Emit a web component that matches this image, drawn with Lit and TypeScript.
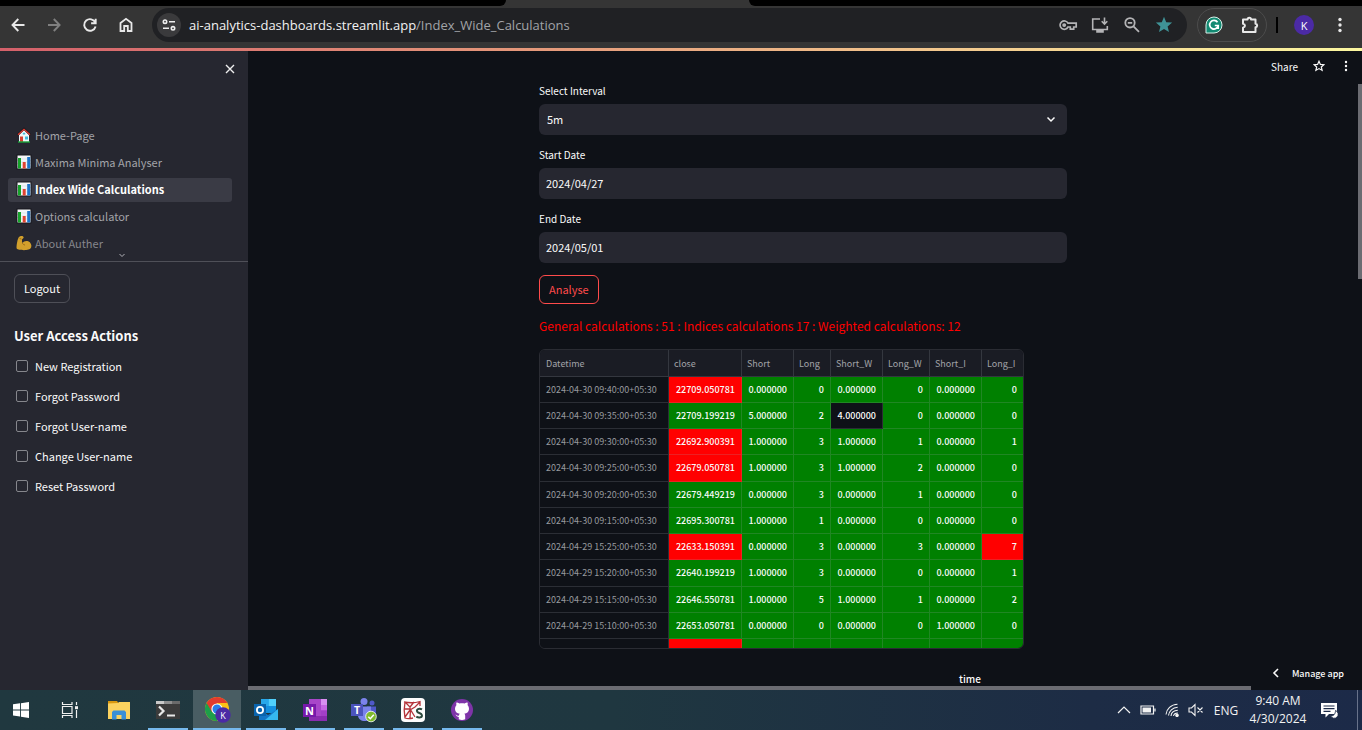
import { LitElement, html, css, svg } from "lit";
import { customElement, state } from "lit/decorators.js";
import { classMap } from "lit/directives/class-map.js";

type Row = [string, string, string, string, string, string, string, string];

const HEADERS = ["Datetime", "close", "Short", "Long", "Short_W", "Long_W", "Short_I", "Long_I"];

const ROWS: Row[] = [
  ["2024-04-30 09:40:00+05:30", "22709.050781", "0.000000", "0", "0.000000", "0", "0.000000", "0"],
  ["2024-04-30 09:35:00+05:30", "22709.199219", "5.000000", "2", "4.000000", "0", "0.000000", "0"],
  ["2024-04-30 09:30:00+05:30", "22692.900391", "1.000000", "3", "1.000000", "1", "0.000000", "1"],
  ["2024-04-30 09:25:00+05:30", "22679.050781", "1.000000", "3", "1.000000", "2", "0.000000", "0"],
  ["2024-04-30 09:20:00+05:30", "22679.449219", "0.000000", "3", "0.000000", "1", "0.000000", "0"],
  ["2024-04-30 09:15:00+05:30", "22695.300781", "1.000000", "1", "0.000000", "0", "0.000000", "0"],
  ["2024-04-29 15:25:00+05:30", "22633.150391", "0.000000", "3", "0.000000", "3", "0.000000", "7"],
  ["2024-04-29 15:20:00+05:30", "22640.199219", "1.000000", "3", "0.000000", "0", "0.000000", "1"],
  ["2024-04-29 15:15:00+05:30", "22646.550781", "1.000000", "5", "1.000000", "1", "0.000000", "2"],
  ["2024-04-29 15:10:00+05:30", "22653.050781", "0.000000", "0", "0.000000", "0", "1.000000", "0"],
  ["", "", "", "", "", "", "", ""],
];

const RED_CELLS = new Set(["0-1", "2-1", "3-1", "6-1", "6-7", "10-1"]);
const DARK_CELLS = new Set(["1-4"]);

const chart = svg`
  <rect x="1" y="1" width="14" height="14" fill="#f4f6f8" stroke="#16161c"/>
  <path d="M1.5 5h13M1.5 8h13M1.5 11h13" stroke="#c9dbe6" stroke-width=".6"/>
  <rect x="2" y="4" width="3" height="10.5" fill="#17a32b"/>
  <rect x="6.7" y="8" width="3" height="6.5" fill="#e0432f"/>
  <rect x="11.2" y="3" width="3" height="11.5" fill="#1d74c9"/>`;
const house = svg`
  <path d="M3 7v8h10V7L8 2.500z" fill="#eef6f8"/>
  <path d="M1.600 8 8 1.800 14.400 8" fill="none" stroke="#1a1a20" stroke-width="2.200"/>
  <path d="M2 7.800 8 2.200 14 7.800" fill="none" stroke="#e23a2e" stroke-width="1.200"/>
  <rect x="4" y="9.500" width="3" height="5.500" fill="#d8402f"/>
  <path d="M9 9.500h3v3H9zM6.800 5.800h2.400v1.800H6.800z" fill="#3fb9d8"/>
  <path d="M2 15h12" stroke="#19a53a" stroke-width="1.400"/>`;
const muscle = svg`
  <path d="M4.2 1.2c1.5-.6 3-.2 3.4.8.2.9-.6 1.9-1.5 2.2-.3 1.300-.2 2.600.3 3.800C7.600 6.300 10 5.400 12.200 6.300c2.600 1.100 3.700 4 3 6-.8 2.200-4 2.900-7.200 2.900-3 0-6.600-.4-7.300-1.600C.2 12 1.200 5.200 2.600 2.600c.4-.7.900-1.100 1.600-1.400z" fill="#f0b62c"/>
  <path d="M6.300 8.200c.6 1 1.500 1.700 2.700 1.900M3.600 3.400l1.800.7" fill="none" stroke="#a96f12" stroke-width=".9"/>`;

const NAV = [
  { label: "Home-Page", icon: house },
  { label: "Maxima Minima Analyser", icon: chart },
  { label: "Index Wide Calculations", icon: chart, active: true },
  { label: "Options calculator", icon: chart },
  { label: "About Auther", icon: muscle, faded: true },
];

const ACTIONS = ["New Registration", "Forgot Password", "Forgot User-name", "Change User-name", "Reset Password"];

@customElement("browser-bar")
export class BrowserBar extends LitElement {
  static styles = css`
    :host { display: block; background: #353535; font-family: "Open Sans", "Noto Sans", sans-serif; }
    .tabs { height: 6px; display: flex; }
    .tabs .before { flex: 0 0 506px; background: #000; border-radius: 0 0 6px 0; }
    .tabs .tab { flex: 0 0 243px; }
    .tabs .after { flex: 1; background: #000; border-radius: 0 0 0 6px; }
    .bar { display: flex; align-items: center; height: 42px; padding: 0 10px 4px 6px; box-sizing: border-box; }
    button { display: grid; place-items: center; border: 0; padding: 0; background: none; color: #e8e8e8; width: 24px; height: 34px; flex: none; }
    button svg { display: block; }
    .nav { display: flex; gap: 12px; margin-right: 14px; }
    .off { color: #808080; }
    .omni { flex: 1; min-width: 0; display: flex; align-items: center; height: 34px; border-radius: 17px; background: #202124; padding: 0 11px 0 5px; gap: 8px; color: #b4b4b6; }
    .omni button { color: #b4b4b6; }
    .omni .site { width: 24px; height: 24px; border-radius: 12px; background: #3a3a3c; color: #eee; }
    .url { flex: 1; min-width: 0; font-size: 13px; line-height: 20px; color: #a2a4a8; white-space: nowrap; }
    .url b { font-weight: 400; color: #f2f2f2; }
    .omni .star { color: #3f9296; }
    .ext { display: flex; align-items: center; gap: 12px; height: 32px; margin-left: 10px; padding: 0 4px; border: 1px solid #4c4c4c; border-radius: 17px; }
    .sep { width: 2px; height: 16px; background: #000; margin: 0 16px 0 9px; }
    .avatar { width: 20px; height: 20px; border-radius: 10px; background: #4b2aa5; color: #fff; font-size: 11px; font-family: inherit; }
    .more { margin-left: 14px; }
    .line { height: 3px; background: linear-gradient(90deg, #d4606a, #e59a7b 40%, #f3c98e 70%, #fbf7a0); }
  `;
  render() {
    return html`
      <div class="tabs"><span class="before"></span><span class="tab"></span><span class="after"></span></div>
      <div class="bar">
        <div class="nav">
          <button aria-label="Back"><svg width="24" height="24" viewBox="0 0 24 24" fill="none" stroke="currentColor" stroke-width="1.9"><path d="M18.500 12H6.800M12.300 6 6.500 12l5.800 6"/></svg></button>
          <button class="off" aria-label="Forward"><svg width="24" height="24" viewBox="0 0 24 24" fill="none" stroke="currentColor" stroke-width="1.900"><path d="M6 12h11.500M11.800 6l5.800 6-5.800 6"/></svg></button>
          <button aria-label="Reload"><svg width="24" height="24" viewBox="0 0 24 24" fill="none" stroke="currentColor" stroke-width="1.900"><path d="M17.300 9.600A5.800 5.800 0 1 0 17.600 13.500M17.700 5.800v4.400h-4.600"/></svg></button>
          <button aria-label="Home"><svg width="24" height="24" viewBox="0 0 24 24" fill="none" stroke="currentColor" stroke-width="1.800"><path d="M6.500 18V10L12 5.800 17.500 10v8h-3.700v-5h-3.600v5z"/></svg></button>
        </div>
        <div class="omni">
          <button class="site" aria-label="Site information"><svg width="16" height="16" viewBox="0 0 16 16" fill="none" stroke="currentColor" stroke-width="1.600"><circle cx="4" cy="4.700" r="1.700"/><path d="M8 4.700h6M2 11.300h6"/><circle cx="12" cy="11.300" r="1.700"/></svg></button>
          <div class="url"><b>ai-analytics-dashboards.streamlit.app</b>/Index_Wide_Calculations</div>
          <button aria-label="Passwords"><svg width="20" height="20" viewBox="0 0 20 20" fill="none" stroke="currentColor" stroke-width="1.700"><path d="M10 8.200A4.200 4.200 0 1 0 10 12h2.300v2.200h3.400V12h2.500V8.200z"/><circle cx="6.200" cy="10.100" r="1.100" fill="currentColor"/></svg></button>
          <button aria-label="Install app"><svg width="20" height="20" viewBox="0 0 20 20" fill="none" stroke="currentColor" stroke-width="1.600"><path d="M10 4H2.700v10.500h14.600V11"/><path d="M7 15h6v2H7z" fill="currentColor"/><path d="M14.500 2.500V9M11.700 6.300l2.800 2.800 2.800-2.800"/></svg></button>
          <button aria-label="Zoom"><svg width="20" height="20" viewBox="0 0 20 20" fill="none" stroke="currentColor" stroke-width="1.800"><circle cx="8" cy="7.800" r="4.700"/><path d="M11.500 11.300l5.500 5.500M5.800 7.800h4.400"/></svg></button>
          <button class="star" aria-label="Bookmarked"><svg width="20" height="20" viewBox="0 0 20 20" fill="currentColor"><path d="M10 1.800l2.200 5.400 5.900.4-4.500 3.800 1.400 5.700-5-3.100-5 3.100 1.400-5.700L1.900 7.600l5.900-.4z"/></svg></button>
        </div>
        <div class="ext">
          <button aria-label="Grammarly"><svg width="18" height="18" viewBox="0 0 18 18"><path d="M1 17V9a8 8 0 1 1 8 8z" fill="#138a72" stroke="#d9efe9" stroke-width="1"/><path d="M12.500 6.300A4.300 4.300 0 1 0 13.200 9.500H9.800M13.200 9.500v3.400" fill="none" stroke="#fff" stroke-width="1.700"/></svg></button>
          <button aria-label="Extensions"><svg width="20" height="20" viewBox="0 0 20 20" fill="none" stroke="currentColor" stroke-width="2" stroke-linejoin="round"><path d="M3 4.500h4.600c0-2.200 3.400-2.200 3.400 0h4.500v4.300c2.200.2 2.200 3.200 0 3.400V17H3v-4.400c2.600-.6 2.600-3.200 0-3.800z"/></svg></button>
        </div>
        <span class="sep"></span>
        <button class="avatar" aria-label="Profile K">K</button>
        <button class="more" aria-label="Menu"><svg width="20" height="20" viewBox="0 0 20 20" fill="currentColor"><circle cx="10" cy="4.500" r="1.700"/><circle cx="10" cy="10" r="1.700"/><circle cx="10" cy="15.500" r="1.700"/></svg></button>
      </div>
      <div class="line"></div>
    `;
  }
}

@customElement("side-panel")
export class SidePanel extends LitElement {
  static styles = css`
    :host { display: flex; flex-direction: column; background: #262730; color: #fafafa; font-family: "Noto Sans CJK SC", sans-serif; font-size: 11px; line-height: 24px; }
    button { font: inherit; color: inherit; background: none; }
    .close { align-self: flex-end; margin: 8px 8px 0 0; width: 20px; height: 20px; border: 0; padding: 0; display: grid; place-items: center; }
    nav { display: flex; flex-direction: column; gap: 3px; padding: 45px 16px 0 8px; }
    a { display: flex; align-items: center; gap: 3px; height: 24px; box-sizing: border-box; padding: 0 0 2px 8px; color: #a3a4a9; text-decoration: none; border-radius: 3px; }
    a.active { background: #3a3b45; color: #fff; font-weight: 700; }
    a.faded { color: #85868c; }
    a.faded svg { opacity: .85; }
    .expand { display: grid; place-items: center; height: 12px; margin-top: -6px; border: 0; border-bottom: 1px solid #4f5058; padding: 0 4px 0 0; box-sizing: border-box; color: #b0b1b6; }
    .body { padding: 12px 14px; }
    .logout { height: 29px; padding: 0 9px 2px; border: 1px solid #4e4f57; border-radius: 6px; }
    h2 { margin: 19px 0 1px; font-size: 13px; line-height: 28px; font-weight: 700; }
    label { display: flex; align-items: center; gap: 7px; height: 30px; padding-left: 2px; }
    input { appearance: none; margin: 0; width: 12px; height: 12px; border: 1px solid #85868c; border-radius: 2px; }
    input:checked { background: #ff4b4b; }
  `;
  render() {
    return html`
      <button class="close" aria-label="Close sidebar"><svg width="12" height="12" viewBox="0 0 12 12" stroke="#eee" stroke-width="1.400"><path d="M2 2l8 8M10 2l-8 8"/></svg></button>
      <nav>
        ${NAV.map((n) => html`<a href="#" class=${classMap({ active: !!n.active, faded: !!n.faded })}><svg width="16" height="16" viewBox="0 0 16 16">${n.icon}</svg>${n.label}</a>`)}
      </nav>
      <button class="expand" aria-label="Show more pages"><svg width="8" height="5" viewBox="0 0 8 5" fill="none" stroke="currentColor"><path d="M1.500 1 4 3.500 6.500 1"/></svg></button>
      <div class="body">
        <button class="logout">Logout</button>
        <h2>User Access Actions</h2>
        ${ACTIONS.map((a) => html`<label><input type="checkbox">${a}</label>`)}
      </div>
    `;
  }
}

@customElement("data-grid")
export class DataGrid extends LitElement {
  static styles = css`
    :host { display: block; width: 485px; max-width: 100%; height: 300px; box-sizing: border-box; overflow: hidden; border: 1px solid #2a2c33; border-radius: 6px; }
    table { width: 100%; table-layout: fixed; border-collapse: separate; border-spacing: 0; font-size: 9px; line-height: 14px; color: #fafafa; }
    th, td { height: 26px; padding: 0 6px; box-sizing: border-box; border-right: 1px solid rgba(160, 165, 175, .2); border-bottom: 1px solid rgba(160, 165, 175, .2); text-align: left; white-space: nowrap; }
    th { height: 27px; padding: 1px 5px 0; background: #1a1c24; color: #a3a4a9; font-weight: 400; }
    th:first-child { padding-left: 6px; }
    th:last-child, td:last-child { border-right: 0; }
    tr:nth-child(4n) td { height: 27px; }
    td { background: #008000; }
    td.num { text-align: right; font-weight: 500; }
    td.index { background: #0e1117; color: #989a9f; }
    td.red { background: #f00; }
    td.dark { background: #0e1117; }
    .c0 { width: 129px; }
    .c1 { width: 73px; }
    .c2 { width: 52px; }
    .c3 { width: 37px; }
    .c4 { width: 52px; }
    .c5 { width: 47px; }
    .c6 { width: 52px; }
  `;
  render() {
    return html`
      <table>
        <thead><tr>${HEADERS.map((h, i) => html`<th scope="col" class="c${i}">${h}</th>`)}</tr></thead>
        <tbody>
          ${ROWS.map((r, y) => html`<tr>${r.map((v, x) => html`<td class=${classMap({
            index: x === 0,
            num: x > 0,
            red: RED_CELLS.has(`${y}-${x}`),
            dark: DARK_CELLS.has(`${y}-${x}`),
          })}>${v}</td>`)}</tr>`)}
        </tbody>
      </table>
    `;
  }
}

@customElement("task-bar")
export class TaskBar extends LitElement {
  static styles = css`
    :host { display: flex; justify-content: space-between; height: 40px; background: linear-gradient(90deg, #20383f, #1f3740 45%, #1d2c45 80%, #1c2a48); color: #f2f2f2; font-family: "Open Sans", "Noto Sans", sans-serif; font-size: 12px; }
    button { border: 0; padding: 0; background: none; color: inherit; font: inherit; display: grid; place-items: center; box-sizing: border-box; }
    .apps { display: flex; gap: 9px; padding-left: 1px; }
    .apps button { width: 40px; height: 40px; }
    .apps .open { border-bottom: 2px solid #76b9ed; padding-top: 2px; }
    .apps .active { background: #495d63; width: 48px; margin: 0 -4px; }
    .apps svg { display: block; }
    .tray { display: flex; align-items: center; }
    .tray button { height: 40px; }
    .tray .i { width: 24px; }
    .tray .lang { width: 36px; }
    .tray .clock { width: 68px; line-height: 18px; margin-right: 7px; }
    .tray .note { width: 20px; margin-right: 18px; }
    .desk { width: 5px; height: 40px; border-left: 1px solid #68728a; box-sizing: border-box; }
  `;
  render() {
    return html`
      <div class="apps">
        <button aria-label="Start"><svg width="18" height="18" viewBox="0 0 18 18" fill="#fff"><path d="M1 3.300 8 2.300v6.200H1zM8.900 2.200 17 1v7.500H8.900zM1 9.400h7v6.200l-7-1zM8.900 9.400H17V17l-8.100-1.200z"/></svg></button>
        <button aria-label="Task view"><svg width="18" height="18" viewBox="0 0 18 18" fill="none" stroke="#f0f0f0" stroke-width="1.200"><path d="M1.500 1v2.500h9.500V1M1.500 17v-2.500h9.500V17M1.500 5.500h9.500v7H1.500zM15.500 1v3M15.500 9v8"/><path d="M14 5.200h3v3h-3z" fill="#f0f0f0" stroke="none"/></svg></button>
        <button aria-label="File Explorer"><svg width="24" height="22" viewBox="0 0 24 22"><path d="M1 2h9l2 3H1z" fill="#d9980f"/><path d="M1 4.500 11 4l1-1h11V20H1z" fill="#fbd25f"/><path d="M5 20.500V13l1.500-1.500h11L19 13v7.500h-4.500V16h-5v4.500z" fill="#3a8fd6"/></svg></button>
        <button class="open" aria-label="Terminal"><svg width="24" height="20" viewBox="0 0 24 20"><path d="M0 1h24v18H0z" fill="#3b3b3b"/><path d="M0 1h8v3H0z" fill="#c9c9c9"/><path d="M8 1h8v3H8z" fill="#8f8f8f"/><path d="M16 1h8v3h-8z" fill="#6a6a6a"/><path d="M3 6.500 7.500 11 3 15.500M11 15.500h8" fill="none" stroke="#e8e8e8" stroke-width="2.200"/></svg></button>
        <button class="open active" aria-label="Google Chrome"><svg width="28" height="28" viewBox="0 0 28 28"><circle cx="14" cy="13" r="12" fill="#fbc116"/><path d="M3.600 7A12 12 0 0 0 14 25l5-9-5-3z" fill="#1e9e4a"/><path d="M3.600 7A12 12 0 0 1 24.400 7H14v4l-5 5z" fill="#e33b2e"/><circle cx="14" cy="13" r="5.600" fill="#fff"/><circle cx="14" cy="13" r="4.500" fill="#2b7de9"/><circle cx="20" cy="19" r="7.700" fill="#4b2aa5"/><text x="20" y="22.500" font-size="9" text-anchor="middle" fill="#fff">K</text></svg></button>
        <button class="open" aria-label="Outlook"><svg width="26" height="24" viewBox="0 0 26 24"><path d="M8 1h15v14H8z" fill="#1490df"/><path d="M15.500 1H23v7h-7.500z" fill="#50d0fb"/><path d="M8 1h7.500v7H8z" fill="#28a8ea"/><path d="M6 11l9 6 10-6v11H6z" fill="#1376c6"/><path d="M25 11v11H12z" fill="#35b8f1"/><path d="M1 6h12v12H1z" fill="#0a64ad"/><circle cx="7" cy="12" r="3.100" fill="none" stroke="#fff" stroke-width="1.800"/></svg></button>
        <button class="open" aria-label="OneNote"><svg width="26" height="24" viewBox="0 0 26 24"><path d="M7 1h18v22H7z" fill="#a846c9"/><path d="M19 1h6v6h-6z" fill="#d88ff0"/><path d="M19 7h6v5.500h-6z" fill="#c565e2"/><path d="M19 12.500h6V18h-6z" fill="#a23fc7"/><path d="M7 18h18v5H7z" fill="#8a2cb0"/><path d="M1 6h13v13H1z" fill="#7719aa"/><text x="7.500" y="16.500" font-size="11" font-weight="700" text-anchor="middle" fill="#fff">N</text></svg></button>
        <button class="open" aria-label="Teams"><svg width="28" height="26" viewBox="0 0 28 26"><circle cx="14" cy="4.500" r="3.500" fill="#7b83eb"/><circle cx="22" cy="6" r="2.500" fill="#5059c9"/><path d="M17 9.500h9V17a5 5 0 0 1-9 2z" fill="#5059c9"/><path d="M8 9.500h13V18c0 8-13 8-13 0z" fill="#7b83eb"/><path d="M1 7h12v12H1z" fill="#4b53bc"/><text x="7" y="16.800" font-size="10.500" font-weight="700" text-anchor="middle" fill="#fff">T</text><circle cx="21" cy="19.500" r="5.300" fill="#7fba2c" stroke="#fff" stroke-width=".8"/><path d="M18.300 19.700l2 2 3.500-4" fill="none" stroke="#fff" stroke-width="1.500"/></svg></button>
        <button class="open" aria-label="KS app"><svg width="26" height="26" viewBox="0 0 26 26"><rect x="1" y="1" width="24" height="24" rx="4" fill="#fdfdfd"/><path d="M4 5c5 1 11 1 16-.5V9M5 5c-1 5-1 11 0 16 3 1 6 .5 8 0M5 5l5 5c.6 4 .5 7 0 11M10 10l4-5M20 5l-5 5-5 3M4.500 12h5.500l5 8M5 20l5-7" fill="none" stroke="#b5343b" stroke-width="1.300"/><path d="M22 12.300c-3-1.600-6 .2-4.800 2.300 1 1.500 4.300 1.500 4.700 3.500.4 2.400-3 3.200-5.600 1.500" fill="none" stroke="#2c4a3e" stroke-width="2"/></svg></button>
        <button class="open" aria-label="GitHub Desktop"><svg width="24" height="24" viewBox="0 0 24 24"><circle cx="12" cy="12" r="11" fill="#7e34a8"/><path d="M12 5.200c-1 0-1.800.1-2.600.4C8 4.700 7 4.400 6.500 4.500c-.4 1-.3 1.900 0 2.500C4.300 9.200 4 15.300 9.800 15.800c-.6.500-.8 1-.9 1.700-1.600.6-2.500-.2-3.200-1.400 0 1.800 1.400 3 3.100 2.800v2.300c2 1 4.400 1 6.400 0v-3.600c0-.9-.3-1.400-.9-1.800 5.700-.5 5.500-6.600 3.200-8.800.3-.6.400-1.500 0-2.500-.5-.1-1.500.2-2.900 1.100-.8-.300-1.600-.4-2.600-.4z" fill="#fff"/></svg></button>
      </div>
      <div class="tray">
        <button class="i" aria-label="Show hidden icons"><svg width="14" height="8" viewBox="0 0 14 8" fill="none" stroke="currentColor" stroke-width="1.200"><path d="M1 7l6-6 6 6"/></svg></button>
        <button class="i" aria-label="Battery"><svg width="16" height="10" viewBox="0 0 16 10" fill="none" stroke="currentColor" stroke-width="1.200"><path d="M1 1h12.500v8H1zM15 3.500v3"/><path d="M2.500 2.500h8.500v5H2.500z" fill="currentColor" stroke="none"/></svg></button>
        <button class="i" aria-label="Network"><svg width="14" height="14" viewBox="0 0 14 14" fill="none" stroke="currentColor" stroke-width="1.100"><path d="M1 11.500C1.500 6 6 1.500 12.500 1.300M3.500 12.500C4 8 7.500 4.500 12.700 4.300M6 13c.3-3.300 3-5.700 6.800-5.800M8.500 13c.3-1.700 2-3 4.400-3"/><circle cx="12" cy="12.300" r="1.200" fill="currentColor"/></svg></button>
        <button class="i" aria-label="Muted"><svg width="16" height="14" viewBox="0 0 16 14" fill="none" stroke="currentColor" stroke-width="1.100"><path d="M1 5h2.500L7 1.500v11L3.500 9H1zM9.500 4.500l5 5M14.500 4.500l-5 5"/></svg></button>
        <button class="lang">ENG</button>
        <button class="clock"><span>9:40 AM<br>4/30/2024</span></button>
        <button class="note" aria-label="Notifications"><svg width="18" height="18" viewBox="0 0 18 18"><path d="M1 2h16v11H9l-3.500 3.500V13H1z" fill="#fff"/><path d="M3.500 5h11M3.500 7.700h11M3.500 10.400h7" stroke="#1c2a48" stroke-width="1.200"/><path d="M15.500 9.500a4 4 0 1 1-5 5.300c3 .6 5-2 5-5.300z" fill="#fff" stroke="#1c2a48" stroke-width=".9"/></svg></button>
        <span class="desk"></span>
      </div>
    `;
  }
}

@customElement("app-root")
export class AppRoot extends LitElement {
  @state() private interval = "5m";

  static styles = css`
    :host { display: flex; flex-direction: column; height: 100vh; overflow: hidden; background: #0e1117; color: #fafafa; font-family: "Noto Sans CJK SC", sans-serif; font-size: 11px; }
    .work { flex: 1; min-height: 0; display: flex; }
    side-panel { flex: 0 0 248px; }
    main { flex: 1; min-width: 0; position: relative; overflow: hidden; padding-right: 4px; }
    .content { display: flex; flex-direction: column; align-items: flex-start; width: 528px; max-width: 90%; margin: 0 auto; padding-top: 32px; }
    .field { display: flex; flex-direction: column; width: 100%; margin-bottom: 12px; }
    .field label { font-size: 10px; line-height: 16px; margin-bottom: 5px; }
    .control, .box { height: 31px; width: 100%; box-sizing: border-box; border: 0; border-radius: 6px; background: #262730; color: #fafafa; font: inherit; padding: 0 7px 2px; margin: 0; }
    .box { display: flex; align-items: center; padding: 0 11px 0 0; }
    .box .control { appearance: none; background: none; padding: 0 8px 2px; flex: 1; outline: 0; }
    .analyse { height: 29px; padding: 0 9px 2px; border: 1px solid #ff4b4b; border-radius: 6px; background: none; color: #ff4b4b; font: inherit; }
    .summary { margin: 11px 0 13px; font-size: 12px; line-height: 21px; color: #f00; }
    .chart { align-self: center; margin-top: 20px; padding-left: 334px; font-size: 10px; line-height: 20px; font-weight: 500; }
    .tools { position: absolute; top: 5px; right: 10px; display: flex; align-items: center; font-size: 10px; }
    .tools button, .manage { border: 0; background: none; color: inherit; font: inherit; padding: 0; display: flex; align-items: center; height: 20px; }
    .tools .share, .tools .fav { margin-right: 15px; }
    .manage { position: absolute; right: 18px; bottom: 7px; gap: 12px; font-size: 9px; font-weight: 500; }
    .vbar { position: absolute; right: 0; top: 33px; width: 4px; height: 195px; background: #6b6c72; }
    .hbar { position: absolute; left: 0; bottom: 0; width: 90%; height: 4px; background: #6b6c72; }
  `;

  render() {
    return html`
      <browser-bar></browser-bar>
      <div class="work">
        <side-panel></side-panel>
        <main>
          <div class="content">
            <div class="field">
              <label for="interval">Select Interval</label>
              <div class="box">
                <select id="interval" class="control" .value=${this.interval} @change=${(e: Event) => (this.interval = (e.target as HTMLSelectElement).value)}><option>5m</option></select>
                <svg width="10" height="7" viewBox="0 0 10 7" fill="none" stroke="#fafafa" stroke-width="1.500"><path d="M1.500 1.500 5 5l3.500-3.500"/></svg>
              </div>
            </div>
            <div class="field">
              <label for="start">Start Date</label>
              <input id="start" class="control" type="text" value="2024/04/27">
            </div>
            <div class="field">
              <label for="end">End Date</label>
              <input id="end" class="control" type="text" value="2024/05/01">
            </div>
            <button class="analyse">Analyse</button>
            <p class="summary">General calculations : 51 : Indices calculations 17 : Weighted calculations: 12</p>
            <data-grid></data-grid>
            <div class="chart">time</div>
          </div>
          <div class="tools">
            <button class="share">Share</button>
            <button class="fav" aria-label="Favourite"><svg width="12" height="12" viewBox="0 0 12 12" fill="none" stroke="#fafafa" stroke-width="1.200"><path d="M6 1.200l1.400 3.200 3.500.3-2.600 2.300.8 3.400L6 8.600l-3.100 1.800.8-3.400L1.100 4.700l3.500-.3z"/></svg></button>
            <button aria-label="Menu"><svg width="12" height="12" viewBox="0 0 12 12" fill="#fafafa"><circle cx="6" cy="2" r="1.200"/><circle cx="6" cy="6" r="1.200"/><circle cx="6" cy="10" r="1.200"/></svg></button>
          </div>
          <button class="manage"><svg width="8" height="10" viewBox="0 0 8 10" fill="none" stroke="#fafafa" stroke-width="1.600"><path d="M6 1 2 5l4 4"/></svg>Manage app</button>
          <span class="vbar"></span>
          <span class="hbar"></span>
        </main>
      </div>
      <task-bar></task-bar>
    `;
  }
}
